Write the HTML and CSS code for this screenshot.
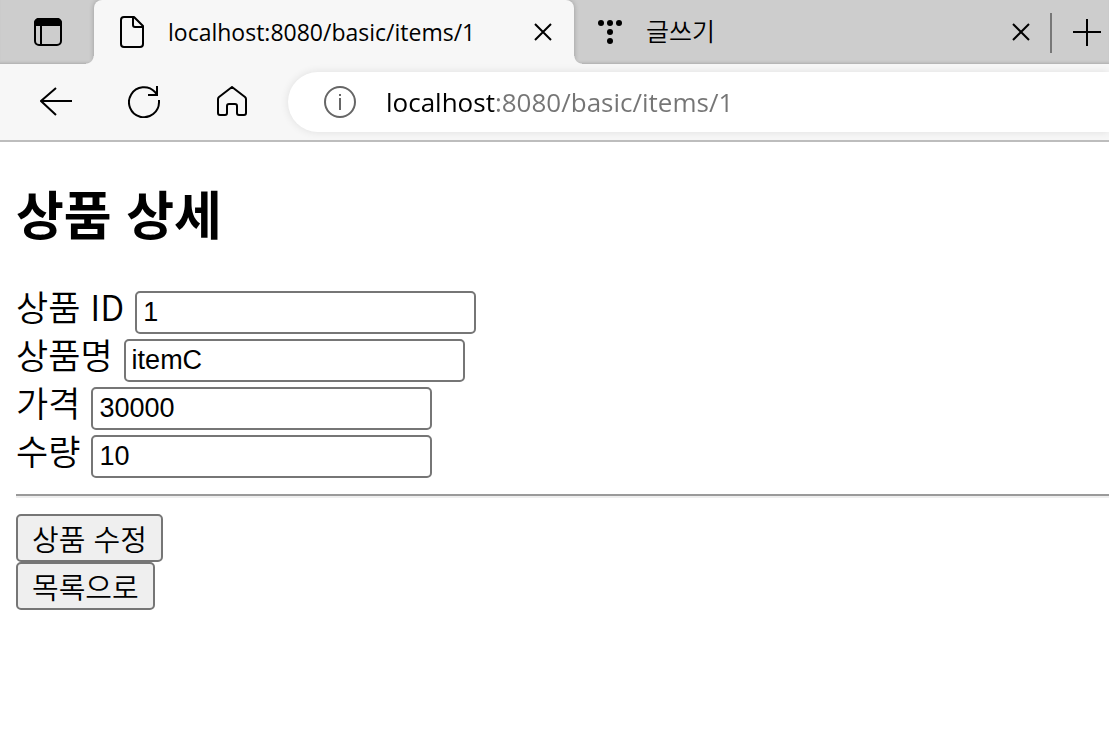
FILE: index.html
```html
<!DOCTYPE html>
<html lang="ko">
<head>
    <meta charset="UTF-8">
    <meta name="viewport" content="width=device-width, initial-scale=1.0">
    <title>상품 상세</title>
    <link rel="stylesheet" href="styles.css">
</head>
<body>
    <header class="browser">
        <div class="tab-strip">
            <button class="tab-actions" type="button" aria-label="Tab actions">
                <svg width="28" height="28" viewBox="0 0 28 28" fill="none" stroke="#000" stroke-width="2">
                    <rect x="1" y="1" width="26" height="26" rx="4"/>
                    <path d="M1 7V5a4 4 0 0 1 4-4h18a4 4 0 0 1 4 4v2z" fill="#000"/>
                    <path d="M7 8v19"/>
                </svg>
            </button>
            <div class="tab active">
                <svg width="24" height="32" viewBox="0 0 24 32" fill="none" stroke="#000" stroke-width="2" stroke-linejoin="round">
                    <path d="M4 1h10l9 9v18a3 3 0 0 1-3 3H4a3 3 0 0 1-3-3V4a3 3 0 0 1 3-3z"/>
                    <path d="M13 1v8a2 2 0 0 0 2 2h8"/>
                </svg>
                <span class="tab-title">localhost:8080/basic/items/1</span>
                <button class="close" type="button" aria-label="Close tab">
                    <svg width="18" height="18" viewBox="0 0 18 18" stroke="#000" stroke-width="2"><path d="M1 1l16 16M17 1L1 17"/></svg>
                </button>
            </div>
            <div class="tab inactive">
                <svg width="24" height="24" viewBox="0 0 24 24">
                    <circle cx="3" cy="3" r="3"/><circle cx="12" cy="3" r="3"/><circle cx="21" cy="3" r="3"/>
                    <circle cx="12" cy="12" r="3"/><circle cx="12" cy="21" r="3"/>
                </svg>
                <span class="tab-title">글쓰기</span>
                <button class="close" type="button" aria-label="Close tab">
                    <svg width="18" height="18" viewBox="0 0 18 18" stroke="#000" stroke-width="2"><path d="M1 1l16 16M17 1L1 17"/></svg>
                </button>
            </div>
            <button class="new-tab" type="button" aria-label="New tab">
                <svg width="28" height="28" viewBox="0 0 28 28" stroke="#000" stroke-width="2"><path d="M0 13h28M14 0v27"/></svg>
            </button>
        </div>
        <div class="toolbar">
            <div class="tools">
                <button class="tool" type="button" aria-label="Back">
                    <svg width="32" height="32" viewBox="0 0 32 32" fill="none" stroke="#000" stroke-width="2"><path d="M32 15H1M16 2L1 15l15 14"/></svg>
                </button>
                <button class="tool" type="button" aria-label="Refresh">
                    <svg width="32" height="32" viewBox="0 0 32 32" fill="none" stroke="#000" stroke-width="2"><path d="M31 14v2A15 15 0 1 1 27 6L29 9M29 0v9h-9"/></svg>
                </button>
                <button class="tool" type="button" aria-label="Home">
                    <svg width="32" height="32" viewBox="0 0 32 32" fill="none" stroke="#000" stroke-width="2" stroke-linejoin="round">
                        <path d="M16 1L29 11q1 1 1 2V27a2 2 0 0 1-2 2h-5a2 2 0 0 1-2-2v-7a2 2 0 0 0-2-2h-6a2 2 0 0 0-2 2v7a2 2 0 0 1-2 2H4a2 2 0 0 1-2-2V13q0-1 1-2z"/>
                    </svg>
                </button>
            </div>
            <div class="address-bar">
                <svg width="32" height="32" viewBox="0 0 32 32" fill="none" stroke="#666" stroke-width="2">
                    <circle cx="16" cy="16" r="15"/>
                    <path d="M16 12v12M16 8v2"/>
                </svg>
                <input class="address" type="text" value="localhost:8080/basic/items/1" aria-label="Address">
            </div>
        </div>
    </header>

    <main class="container">
        <h2>상품 상세</h2>
        <div class="field">
            <label for="itemId">상품 ID</label>
            <input type="text" id="itemId" value="1" readonly>
        </div>
        <div class="field">
            <label for="itemName">상품명</label>
            <input type="text" id="itemName" value="itemC" readonly>
        </div>
        <div class="field">
            <label for="price">가격</label>
            <input type="text" id="price" value="30000" readonly>
        </div>
        <div class="field">
            <label for="quantity">수량</label>
            <input type="text" id="quantity" value="10" readonly>
        </div>
        <hr>
        <div class="actions">
            <button type="button">상품 수정</button>
            <button type="button">목록으로</button>
        </div>
    </main>
</body>
</html>
```
FILE: styles.css
```css
* {
    box-sizing: border-box;
}
body {
    margin: 0;
    background-color: #fff;
    color: #000;
    font-family: "Noto Sans CJK KR", sans-serif;
    font-weight: 350;
}
svg {
    display: block;
    flex-shrink: 0;
}

/* Browser frame */
.browser {
    background-color: #f7f7f7;
    border-bottom: 2px solid #bdbdbd;
    font-family: "Open Sans", "Noto Sans CJK KR", sans-serif;
}
.browser button {
    display: flex;
    align-items: center;
    justify-content: center;
    padding: 0;
    border: none;
    background: none;
}
.tab-strip {
    display: flex;
    height: 64px;
    background-color: #cdcdcd;
    box-shadow: inset 0 -3px 3px -2px #aaa;
}
.browser .tab-actions {
    width: 94px;
    padding-left: 2px;
}
.tab {
    display: flex;
    align-items: center;
    font-size: 23px;
}
.tab-title {
    flex: 1;
    white-space: nowrap;
}
.tab.active {
    position: relative;
    width: 480px;
    padding: 0 22px 0 26px;
    gap: 24px;
    border-radius: 8px 8px 0 0;
    background-color: #f7f7f7;
    box-shadow: 0 0 5px rgba(0, 0, 0, 0.25);
    clip-path: inset(0 -8px 0 -8px);
    font-weight: 400;
}
.tab.active::before,
.tab.active::after {
    content: "";
    position: absolute;
    bottom: 0;
    width: 8px;
    height: 8px;
}
.tab.active::before {
    left: -8px;
    background: radial-gradient(circle at 0 0, transparent 7px, #f7f7f7 8px);
}
.tab.active::after {
    right: -8px;
    background: radial-gradient(circle at 100% 0, transparent 7px, #f7f7f7 8px);
}
.tab.inactive {
    flex: 1;
    padding: 0 20px 0 24px;
    gap: 24px;
    font-family: "Noto Sans CJK KR", sans-serif;
    font-size: 25px;
}
.tab.inactive .tab-title {
    padding-bottom: 4px;
}
.close {
    width: 18px;
    height: 18px;
}
.browser .new-tab {
    width: 59px;
    height: 40px;
    margin-top: 13px;
    padding-left: 12px;
    border-left: 2px solid #777;
}
.toolbar {
    display: flex;
    align-items: center;
    height: 76px;
    padding-left: 40px;
    gap: 40px;
}
.tools {
    display: flex;
    gap: 56px;
}
.tool {
    width: 32px;
    height: 32px;
}
.address-bar {
    display: flex;
    flex: 1;
    align-items: center;
    height: 60px;
    padding-left: 36px;
    gap: 30px;
    border-radius: 30px 0 0 30px;
    background-color: #fff;
    box-shadow: 0 0 8px rgba(0, 0, 0, 0.1);
}
.address {
    flex: 1;
    padding: 0;
    border: none;
    outline: none;
    /* host is black, the rest of the url is gray */
    background: linear-gradient(to right, #000 109px, #757575 109px);
    -webkit-background-clip: text;
    background-clip: text;
    color: #757575;
    -webkit-text-fill-color: transparent;
    font-family: inherit;
    font-size: 26px;
}

/* Item detail */
.container {
    padding-left: 16px;
}
h2 {
    margin: 32px 0;
    font-size: 52px;
    line-height: 78px;
}
.field {
    display: flex;
    align-items: baseline;
    height: 48px;
    gap: 11px;
    font-size: 35px;
    line-height: 43px;
}
.field input {
    width: 341px;
    height: 43px;
    padding: 2px 6px;
    border: 2px solid #767676;
    border-radius: 5px;
    font-family: "Liberation Sans", Arial, sans-serif;
    font-size: 27px;
}
hr {
    margin: 18px 0 16px;
    border: none;
    border-top: 2px solid #9a9a9a;
    border-bottom: 2px solid #eee;
}
.actions {
    display: flex;
    flex-direction: column;
    align-items: flex-start;
}
.actions button {
    height: 48px;
    padding: 0 14px;
    border: 2px solid #767676;
    border-radius: 5px;
    background-color: #efefef;
    font-family: inherit;
    font-size: 29px;
    font-weight: 350;
    line-height: 44px;
}
```
